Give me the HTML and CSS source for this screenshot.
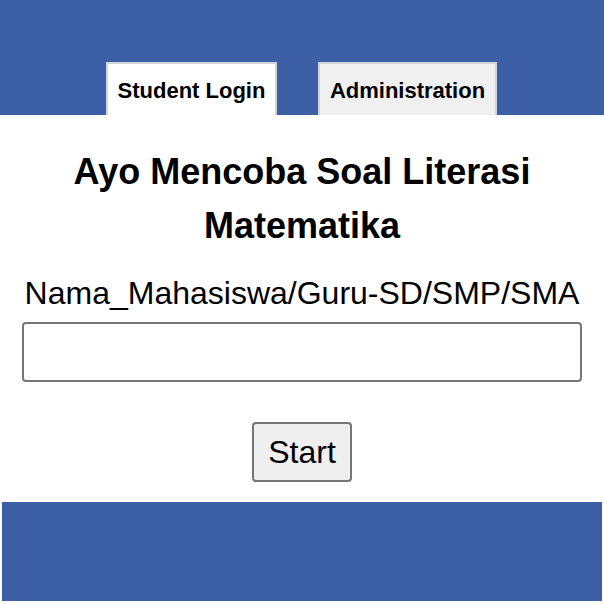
FILE: index.html
```html
<!DOCTYPE html>
<html>
<head>
<meta charset="utf-8">
<link rel="stylesheet" href="styles.css">
</head>
<body>
<div class="header">
  <div class="tabs">
    <div class="tab tab-active">Student Login</div>
    <div class="tab tab-inactive">Administration</div>
  </div>
</div>
<div class="main">
  <h1 class="title">Ayo Mencoba Soal Literasi Matematika</h1>
  <div class="label">Nama_Mahasiswa/Guru-SD/SMP/SMA</div>
  <input class="name-input" type="text">
  <div class="actions">
    <button class="start">Start</button>
  </div>
</div>
<div class="footer"></div>
</body>
</html>
```
FILE: styles.css
```css
html, body {
  margin: 0;
  padding: 0;
  background: #ffffff;
  font-family: "Liberation Sans", Arial, sans-serif;
  color: #000;
}
.header {
  background: #3d5fa5;
  height: 115px;
  display: flex;
  align-items: flex-end;
}
.tabs {
  display: flex;
  gap: 41px;
  padding-left: 106px;
}
.tab {
  box-sizing: border-box;
  height: 53px;
  border: 2px solid #cfd3da;
  border-bottom: none;
  font-weight: bold;
  font-size: 22px;
  display: flex;
  align-items: center;
  justify-content: center;
  padding-top: 3px;
}
.tab-active {
  width: 171px;
  background: #ffffff;
}
.tab-inactive {
  width: 179px;
  background: #f0f0f0;
}
.main {
  display: flex;
  flex-direction: column;
  align-items: center;
  padding: 30px 22px 20px;
}
.title {
  margin: 0;
  width: 500px;
  text-align: center;
  font-size: 36px;
  line-height: 54px;
  font-weight: bold;
}
.label {
  margin-top: 20px;
  font-size: 32px;
  line-height: 40px;
}
.name-input {
  box-sizing: border-box;
  margin-top: 9px;
  width: 560px;
  height: 60px;
  border: 2px solid #767676;
  border-radius: 4px;
  background: #fff;
}
.actions {
  margin-top: 40px;
}
.start {
  box-sizing: border-box;
  width: 100px;
  height: 60px;
  font-family: "Liberation Sans", Arial, sans-serif;
  font-size: 32px;
  background: #efefef;
  border: 2px solid #767676;
  border-radius: 4px;
  color: #000;
}
.footer {
  background: #3d5fa5;
  height: 99px;
  margin: 0 2px;
}
```
